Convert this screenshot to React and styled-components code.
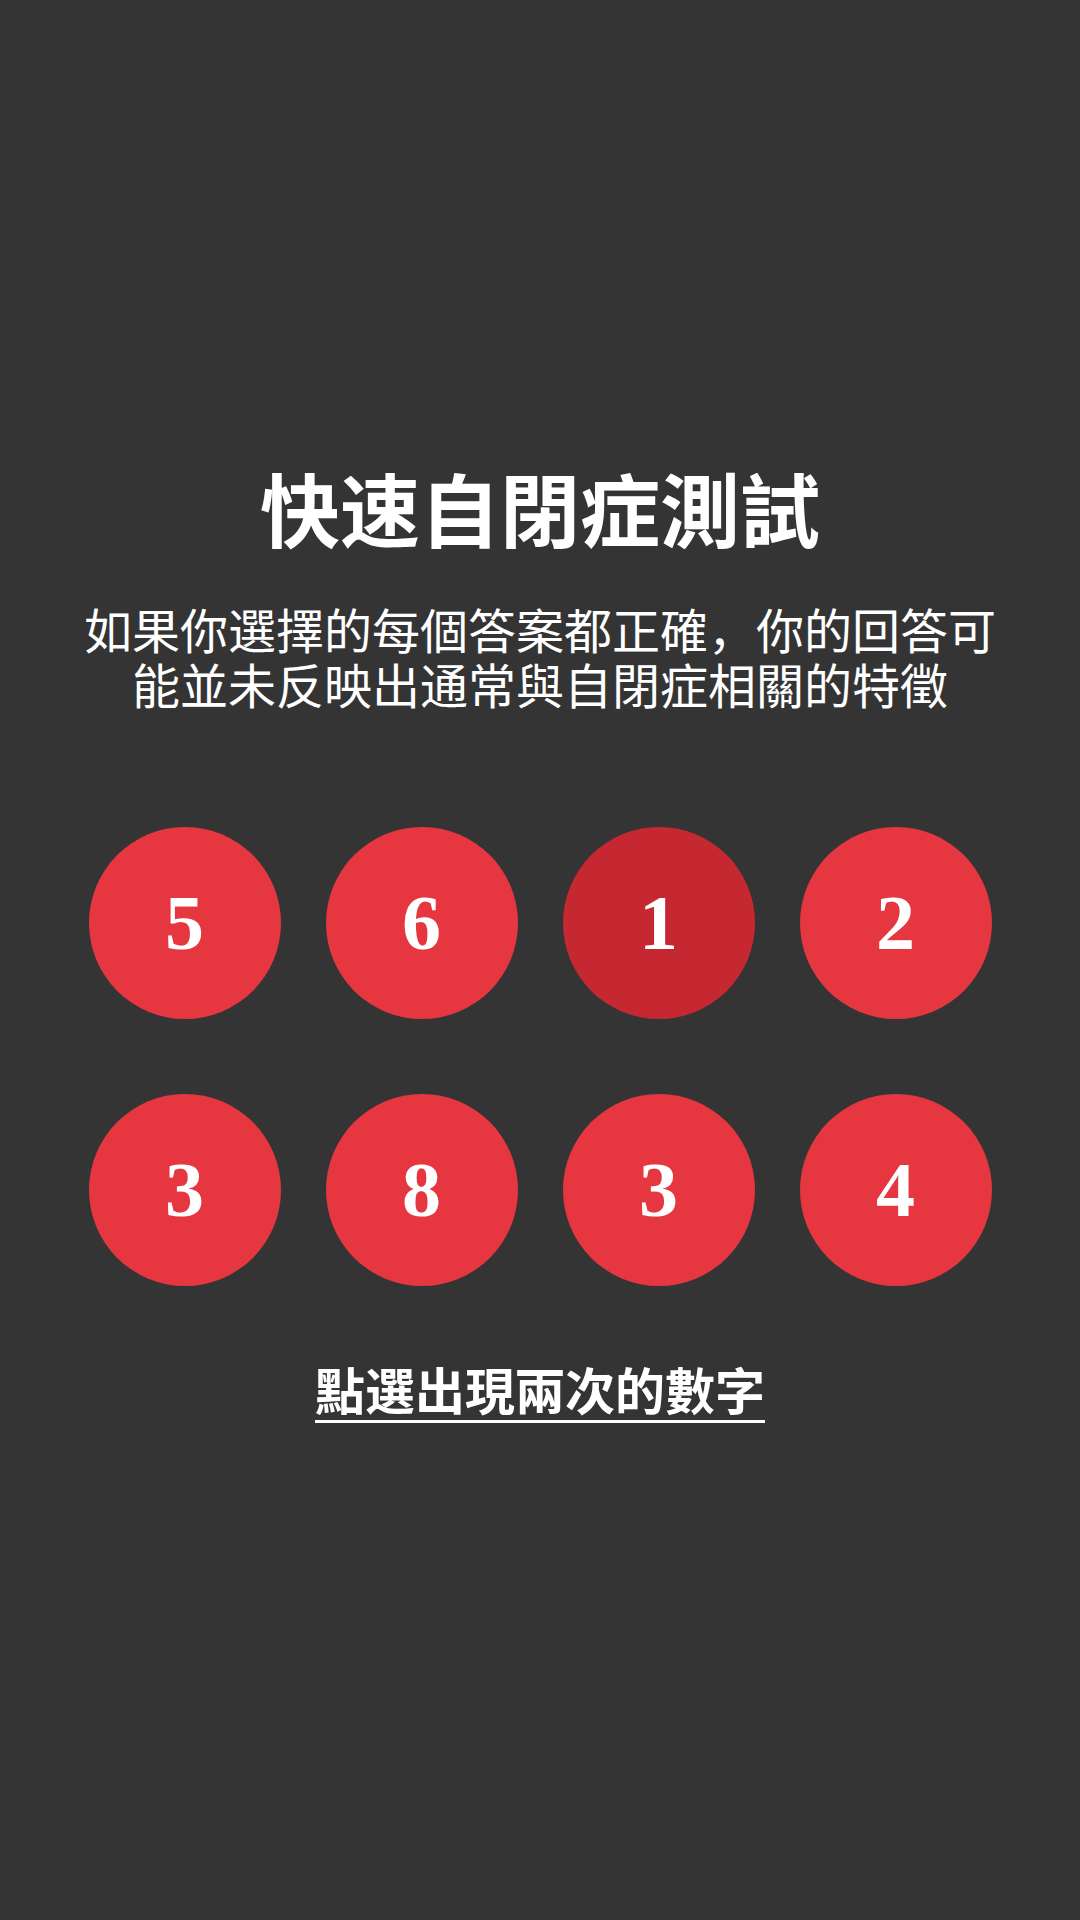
import React from "react";
import styled, { createGlobalStyle } from "styled-components";

const GlobalStyle = createGlobalStyle`
  html, body {
    margin: 0;
    padding: 0;
    background: #343434;
  }
`;

const numbers = [
  { value: 5 },
  { value: 6 },
  { value: 1, active: true },
  { value: 2 },
  { value: 3 },
  { value: 8 },
  { value: 3 },
  { value: 4 },
];

const App = () => {
  return (
    <>
      <GlobalStyle />
      <Page>
        <Title>快速自閉症測試</Title>
        <Subtitle>
          如果你選擇的每個答案都正確，你的回答可能並未反映出通常與自閉症相關的特徵
        </Subtitle>
        <Grid>
          {numbers.map((n, i) => (
            <Bubble key={i} $active={n.active}>
              {n.value}
            </Bubble>
          ))}
        </Grid>
        <Prompt>點選出現兩次的數字</Prompt>
      </Page>
    </>
  );
};

export default App;

const Page = styled.div`
  min-height: 1920px;
  background: #343434;
  display: flex;
  flex-direction: column;
  align-items: center;
  padding-top: 458px;
  box-sizing: border-box;
  color: #ffffff;
  font-family: "Noto Sans CJK SC", "Noto Sans", sans-serif;
`;

const Title = styled.h1`
  margin: 0;
  font-size: 80px;
  font-weight: 700;
  line-height: 96px;
  text-align: center;
`;

const Subtitle = styled.p`
  margin: 47px 0 0 0;
  width: 930px;
  font-size: 48px;
  font-weight: 400;
  line-height: 55px;
  text-align: center;
`;

const Grid = styled.div`
  margin-top: 116px;
  display: grid;
  grid-template-columns: repeat(4, 192px);
  column-gap: 45px;
  row-gap: 75px;
`;

const Bubble = styled.button`
  width: 192px;
  height: 192px;
  border: none;
  border-radius: 50%;
  padding: 0;
  background: ${(p) => (p.$active ? "#c62832" : "#e63740")};
  color: #ffffff;
  font-family: "Liberation Serif", "DejaVu Serif", serif;
  font-weight: 700;
  font-size: 78px;
  line-height: 1;
  display: flex;
  align-items: center;
  justify-content: center;
  cursor: pointer;
`;

const Prompt = styled.a`
  margin-top: 72px;
  font-family: "Noto Sans CJK SC", sans-serif;
  font-size: 50px;
  font-weight: 700;
  line-height: 60px;
  text-decoration: underline;
  text-decoration-thickness: 3px;
  text-underline-offset: 10px;
  color: #ffffff;
  cursor: pointer;
`;
